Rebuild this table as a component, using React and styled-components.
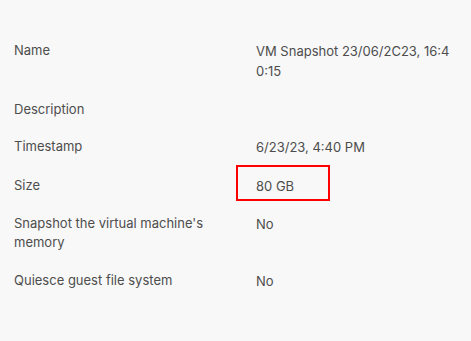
import React from "react";
import styled, { createGlobalStyle } from "styled-components";

const GlobalStyle = createGlobalStyle`
  html, body {
    margin: 0;
    padding: 0;
    background: #f8f8f8;
  }
  body {
    font-family: Inter, "Open Sans", sans-serif;
  }
`;

const Panel = styled.div`
  width: 471px;
  height: 341px;
  box-sizing: border-box;
  padding: 41px 14px 0 14px;
  background: #f8f8f8;
  color: #4d4d4d;
  font-size: 13px;
  line-height: 19px;
`;

const Details = styled.dl`
  display: grid;
  grid-template-columns: 242px 1fr;
  row-gap: 18.5px;
  margin: 0;
`;

const Label = styled.dt`
  margin: 0;
  padding-right: 24px;
`;

const Value = styled.dd`
  position: relative;
  margin: 0;
  word-break: break-all;
  line-height: 20px;
`;

// red outline drawn round a highlighted value
const Highlight = styled.span`
  position: absolute;
  left: -20px;
  top: -10.5px;
  width: 94px;
  height: 36px;
  box-sizing: border-box;
  border: 2px solid #f00;
  pointer-events: none;
`;

const rows = [
  { label: "Name", value: "VM Snapshot 23/06/2C23, 16:40:15" },
  { label: "Description", value: "" },
  { label: "Timestamp", value: "6/23/23, 4:40 PM" },
  { label: "Size", value: "80 GB", marked: true },
  { label: "Snapshot the virtual machine's memory", value: "No" },
  { label: "Quiesce guest file system", value: "No" },
];

export default function App() {
  return (
    <>
      <GlobalStyle />
      <Panel>
        <Details>
          {rows.map((row) => (
            <React.Fragment key={row.label}>
              <Label>{row.label}</Label>
              <Value>
                {row.value}
                {row.marked && <Highlight />}
              </Value>
            </React.Fragment>
          ))}
        </Details>
      </Panel>
    </>
  );
}
